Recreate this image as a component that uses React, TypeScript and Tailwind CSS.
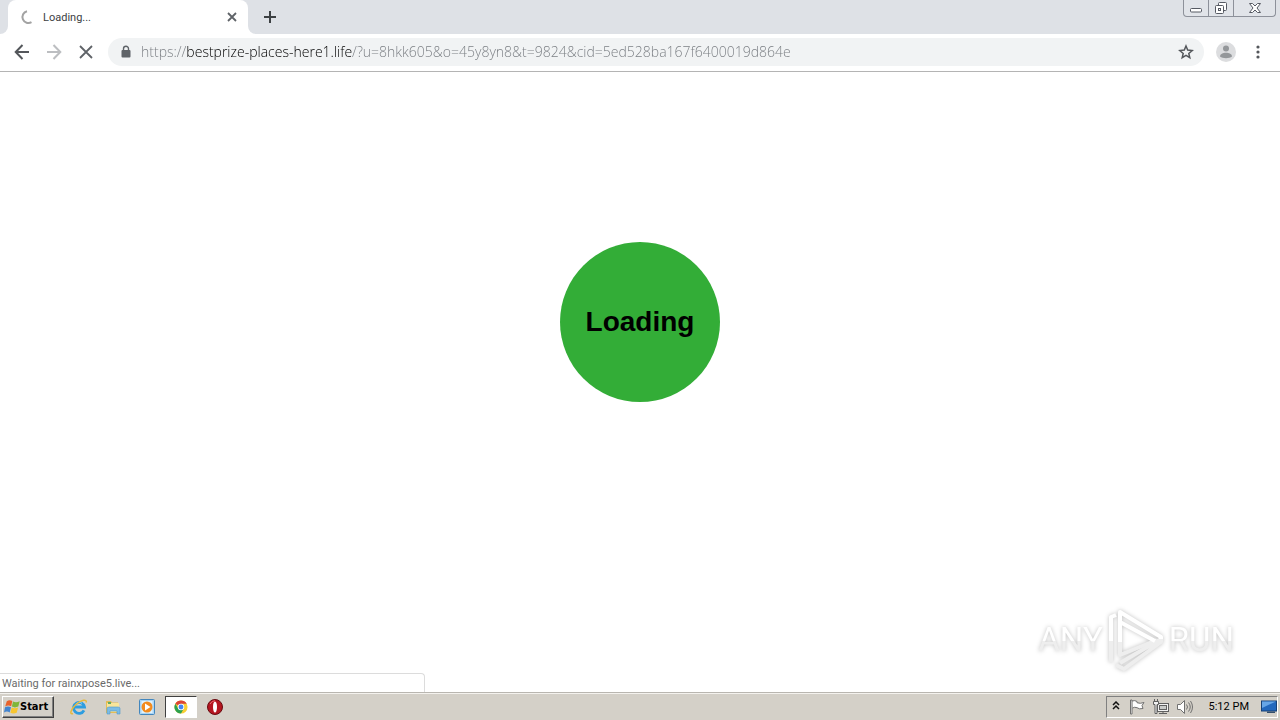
import type { ReactNode } from "react";

const PAGE_URL =
  "https://bestprize-places-here1.life/?u=8hkk605&o=45y8yn8&t=9824&cid=5ed528ba167f6400019d864e";

function IconButton({ label, className, children }: { label: string; className?: string; children: ReactNode }) {
  return (
    <button type="button" aria-label={label} className={`flex shrink-0 items-center justify-center ${className ?? ""}`}>
      {children}
    </button>
  );
}

function TabStrip() {
  return (
    <header className="flex h-[34px] items-stretch bg-[#dee1e6]">
      <div className="flex w-2 bg-white">
        <div className="flex-1 rounded-br-lg bg-[#dee1e6]" />
      </div>
      <div className="flex w-60 items-center rounded-t-lg bg-white pr-2 pl-3">
        <svg className="size-4 shrink-0" viewBox="0 0 16 16" fill="none" stroke="#a3a3a3" strokeWidth="2">
          <path d="M7 2.200A6 6 0 1 0 11.500 13.200" />
        </svg>
        <span className="ml-[7px] flex-1 pt-px text-[11px] leading-4 text-[#3c4043]">Loading...</span>
        <IconButton label="Close tab" className="size-4">
          <svg className="size-4" viewBox="0 0 16 16" stroke="#5f6368" strokeWidth="1.800">
            <path d="M4 4l8 8M12 4l-8 8" />
          </svg>
        </IconButton>
      </div>
      <div className="flex w-2 bg-white">
        <div className="flex-1 rounded-bl-lg bg-[#dee1e6]" />
      </div>
      <IconButton label="New tab" className="w-7">
        <svg className="size-4" viewBox="0 0 16 16" stroke="#3c4043" strokeWidth="2">
          <path d="M8 2v12M2 8h12" />
        </svg>
      </IconButton>
      <div className="mr-1 ml-auto flex h-[17px] rounded-b-[4px] border border-t-0 border-[#8d919a] bg-[#e1e4e9]">
        <IconButton label="Minimize" className="w-[25px] border-r border-[#8d919a]">
          <svg className="h-4 w-6" viewBox="0 0 24 16" fill="#fff" stroke="#565a63">
            <rect x="6.500" y="8.500" width="11" height="3.500" rx="1" />
          </svg>
        </IconButton>
        <IconButton label="Restore" className="w-[25px] border-r border-[#8d919a]">
          <svg className="h-4 w-6" viewBox="0 0 24 16" fill="#fff" stroke="#565a63">
            <rect x="9.500" y="2.500" width="8" height="8" rx="1" />
            <rect x="6.500" y="5.500" width="8" height="8" rx="1" />
            <rect x="9.500" y="8.500" width="2" height="2" />
          </svg>
        </IconButton>
        <IconButton label="Close" className="w-[41px]">
          <svg className="h-4 w-6" viewBox="0 0 24 16" fill="#fff" stroke="#565a63" strokeLinejoin="round">
            <path d="M6.500 3.500h3L12 6l2.500-2.500h3L14 8l3.500 4.500h-3L12 10l-2.500 2.500h-3L10 8z" />
          </svg>
        </IconButton>
      </div>
    </header>
  );
}

function Toolbar() {
  return (
    <nav className="flex h-[38px] items-center border-b border-[#b4b4b4] bg-white pr-3 pb-[2px] pl-[10px]">
      <IconButton label="Back" className="mr-2 size-6">
        <svg className="size-6" viewBox="0 0 24 24" fill="none" stroke="#54575b" strokeWidth="2">
          <path d="M19 12H6M12.500 5L5.700 12l6.800 7" />
        </svg>
      </IconButton>
      <IconButton label="Forward" className="mr-2 size-6">
        <svg className="size-6" viewBox="0 0 24 24" fill="none" stroke="#bcbec1" strokeWidth="2">
          <path d="M5 12h13M11.500 5l6.800 7-6.800 7" />
        </svg>
      </IconButton>
      <IconButton label="Stop loading" className="mr-[10px] size-6">
        <svg className="size-6" viewBox="0 0 24 24" stroke="#5f6368" strokeWidth="1.800">
          <path d="M6 6l12 12M18 6L6 18" />
        </svg>
      </IconButton>
      <div className="flex h-7 min-w-0 flex-1 items-center rounded-full bg-[#f1f3f4] pr-[10px] pl-[10px]">
        <svg className="size-4 shrink-0" viewBox="0 0 16 16" aria-hidden="true">
          <rect x="3.500" y="6" width="9" height="7.500" rx="1" fill="#5f6368" />
          <path d="M5.500 6.500V4.700a2.500 2.500 0 0 1 5 0v1.800" fill="none" stroke="#5f6368" strokeWidth="1.400" />
        </svg>
        <input
          aria-label="Address"
          type="text"
          defaultValue={PAGE_URL}
          className="ml-[7px] h-6 min-w-0 flex-1 bg-[linear-gradient(to_right,#777b80_46px,#000_46px,#000_211px,#777b80_211px)] bg-clip-text font-['Open_Sans',sans-serif] text-[14px] font-light text-transparent outline-none"
        />
        <IconButton label="Bookmark this page" className="size-4">
          <svg className="size-4" viewBox="0 0 16 16" fill="none" stroke="#54575b" strokeWidth="1.500">
            <path d="M8 2l1.700 4.100 4.500.4-3.400 2.900 1 4.300L8 11.400l-3.800 2.300 1-4.300-3.400-2.900 4.500-.4z" />
          </svg>
        </IconButton>
      </div>
      <IconButton label="Profile" className="ml-3 size-5">
        <svg className="size-5" viewBox="0 0 20 20">
          <circle cx="10" cy="10" r="10" fill="#dcdddf" />
          <circle cx="10" cy="6.500" r="3" fill="#94979a" />
          <path d="M4 14.500c0-2.600 3-3.800 6-3.800s6 1.200 6 3.800c-1.300 1.200-3.500 1.700-6 1.700s-4.700-.5-6-1.700z" fill="#94979a" />
        </svg>
      </IconButton>
      <IconButton label="Menu" className="ml-3 size-5">
        <svg className="size-5" viewBox="0 0 20 20" fill="#54575b">
          <circle cx="10" cy="5" r="1.600" />
          <circle cx="10" cy="10" r="1.600" />
          <circle cx="10" cy="15" r="1.600" />
        </svg>
      </IconButton>
    </nav>
  );
}

function Watermark() {
  return (
    <div className="absolute right-[46px] bottom-5 flex items-center gap-[5px] font-['Roboto',sans-serif] text-[33px] leading-[64px] drop-shadow-[0_0_2px_rgba(0,0,0,0.25)]">
      <span className="bg-[linear-gradient(to_bottom,#fff_52%,#eee_52%)] bg-clip-text text-transparent">ANY</span>
      <svg className="h-16 w-14" viewBox="0 0 56 64" fill="none" strokeWidth="4" strokeLinejoin="round" aria-hidden="true">
        <g stroke="#eeeeee">
          <path d="M3 54V33M12 33v14l37-15" />
          <path d="M8 57l8 4 37-27v-3L12 55" />
        </g>
        <path d="M3 33V9l5-2" stroke="#fff" />
        <path d="M12 34V4l41 25v2M12 14l35 19" stroke="#fff" />
      </svg>
      <span className="bg-[linear-gradient(to_bottom,#fff_52%,#eee_52%)] bg-clip-text text-transparent">RUN</span>
    </div>
  );
}

function PageContent() {
  return (
    <main className="relative flex flex-1 flex-col items-center bg-white pt-[170px]">
      <div className="flex size-40 items-center justify-center rounded-full bg-[#33ad37]">
        <h1 className="font-['Liberation_Sans',sans-serif] text-[28px] leading-8 font-bold text-black">Loading</h1>
      </div>
      <Watermark />
      <div
        role="status"
        className="absolute bottom-0 left-0 w-[425px] rounded-tr-[4px] border-t border-r border-[#dcdcdc] bg-white pt-px pl-[2px] text-[11px] leading-[17px] text-[#6a6a6a]"
      >
        Waiting for rainxpose5.live...
      </div>
    </main>
  );
}

function WindowsFlag() {
  return (
    <svg className="size-4 shrink-0" viewBox="0 0 16 16">
      <path d="M2.800 2.200Q5.500.2 8.300 2L7.200 7.200Q4.200 5.600 1.200 7.400z" fill="#e8622c" />
      <path d="M9 2.400Q12 4 15.700 2.200L14.300 7.600Q10.800 9.200 7.900 7.600z" fill="#7fb63a" />
      <path d="M1 8.200Q4 6.600 7 8.200L5.700 13.400Q3 11.800 0 13.400z" fill="#4284cf" />
      <path d="M7.700 8.500Q10.800 10 14.100 8.400L12.700 13.800Q9.300 15.400 6.400 13.800z" fill="#f7c52f" />
    </svg>
  );
}

function Taskbar() {
  return (
    <footer className="flex h-7 items-center border-t border-[#b9b6b0] bg-[#d4d0c8] pr-[2px] pl-[2px] shadow-[inset_0_1px_0_#f4f2ee]">
      <button
        type="button"
        className="flex h-[22px] w-[52px] shrink-0 items-center border border-t-white border-r-[#404040] border-b-[#404040] border-l-white pt-px pl-px font-['DejaVu_Sans_Condensed','DejaVu_Sans',sans-serif] text-[11px] font-bold text-black shadow-[inset_-1px_-1px_0_#808080]"
      >
        <WindowsFlag />
        Start
      </button>
      <div className="ml-[9px] flex items-center gap-[2px]">
        <IconButton label="Internet Explorer" className="h-[22px] w-8">
          <svg className="size-[18px]" viewBox="0 0 18 18" fill="none">
            <path d="M14 12.300A5.500 5.500 0 1 1 14.500 9H5" stroke="#2d9de0" strokeWidth="2.800" />
            <path d="M5.500 6.500A4.500 4.500 0 0 1 12 5.300" stroke="#8fd7fa" strokeWidth="1" />
            <path d="M3 15.500C-1 17 1 11 6 6.500S17.500.5 16 4.500" stroke="#e7b93b" strokeWidth="1.500" />
          </svg>
        </IconButton>
        <IconButton label="Windows Explorer" className="h-[22px] w-8">
          <svg className="size-4" viewBox="0 0 16 16">
            <path d="M1 2h5l1 1.500h6V14H1z" fill="#e5bd55" />
            <path d="M2 4h12v9H2z" fill="#f9e59a" />
            <path d="M3 3h3v2H3z" fill="#61ab63" />
            <path d="M2 9.500Q2 8 4 8h9q2 0 2 1.500V15h-3v-3H5v3H2z" fill="#7cbce5" stroke="#4f99ca" strokeWidth=".6" />
          </svg>
        </IconButton>
        <IconButton label="Media Player" className="h-[22px] w-8">
          <svg className="size-4" viewBox="0 0 16 16">
            <rect x=".5" y=".5" width="15" height="15" rx="1" fill="#a9d5f6" stroke="#4386bd" />
            <rect x="2.500" y="2" width="11" height="12" fill="#dff2fd" />
            <circle cx="8" cy="8" r="5.500" fill="#f38b1e" />
            <path d="M6 4.500L11.500 8 6 11.500z" fill="#fff" />
          </svg>
        </IconButton>
        <IconButton
          label="Google Chrome"
          className="h-[22px] w-8 border border-t-[#404040] border-r-white border-b-white border-l-[#404040] bg-white"
        >
          <svg className="size-[14px]" viewBox="0 0 16 16">
            <circle cx="8" cy="8" r="7.500" fill="#f9cf34" />
            <path d="M8 8L1.500 4.250A7.500 7.500 0 0 1 14.500 4.250H8z" fill="#dc4437" />
            <path d="M1.500 4.250A7.500 7.500 0 0 0 8 15.500L11.200 9.800 8 8 4.800 9.800z" fill="#2ca150" />
            <circle cx="8" cy="8" r="3.700" fill="#fff" />
            <circle cx="8" cy="8" r="2.800" fill="#4285f4" />
          </svg>
        </IconButton>
        <IconButton label="Opera" className="h-[22px] w-8">
          <svg className="size-4" viewBox="0 0 16 16">
            <circle cx="8" cy="8" r="7.500" fill="#b51620" stroke="#680a10" />
            <ellipse cx="8" cy="8" rx="2" ry="5.500" fill="#fff" />
            <path d="M3 5Q5 1.500 8 1.800" stroke="#ed6b72" fill="none" />
          </svg>
        </IconButton>
      </div>
      <div className="ml-auto flex h-[22px] items-center border border-t-[#808080] border-r-white border-b-white border-l-[#808080] pl-[3px]">
        <IconButton label="Show hidden icons" className="h-4 w-3">
          <svg className="h-3 w-2" viewBox="0 0 8 12" fill="none" stroke="#111" strokeWidth="1.500">
            <path d="M1 4l3-3 3 3M1 8l3-3 3 3" />
          </svg>
        </IconButton>
        <IconButton label="Action Center" className="ml-[7px] size-4">
          <svg className="size-4" viewBox="0 0 16 16" fill="#fff" stroke="#707070">
            <path d="M3 2q3-1 5 .5v1.200q3 1.300 7-.2l-2 3 1 3q-4 1-6-.8Q5.500 7.700 3.500 9M1.500 1h1.500v14h-1.500z" />
          </svg>
        </IconButton>
        <IconButton label="Network" className="ml-2 size-4">
          <svg className="size-4" viewBox="0 0 16 16" fill="#f2f2f2" stroke="#606060">
            <rect x="4.500" y="4.500" width="11" height="8" />
            <rect x="6.500" y="6.500" width="7" height="4" fill="#c9cbc9" />
            <path d="M6 14.500h8M10 12.500v2M1.500 2v-2M4.500 2v-2M.5 2.500h5v3h-1.500v9h-2v-9H.5z" />
          </svg>
        </IconButton>
        <IconButton label="Volume" className="ml-2 size-4">
          <svg className="size-4" viewBox="0 0 16 16" fill="#fff" stroke="#707070">
            <path d="M.5 5.500h3L7.500 1.500v13L3.500 10.500h-3z" />
            <path d="M9.500 5.500q2 2.500 0 5M11.500 3.500q3.500 4.500 0 9M13.500 2q4 6 0 12" fill="none" />
          </svg>
        </IconButton>
        <time className="ml-4 pt-px text-[11px] leading-4 whitespace-nowrap text-black">5:12 PM</time>
        <IconButton label="Show desktop" className="ml-3 size-4">
          <svg className="size-4" viewBox="0 0 16 16">
            <rect x=".5" y="2" width="15" height="10" fill="#2368bd" stroke="#174176" />
            <path d="M1 2.500h14L1 9z" fill="#67a6e7" />
            <path d="M6 12.500h8v1.500H6z" fill="#334e6c" />
          </svg>
        </IconButton>
      </div>
    </footer>
  );
}

export default function App() {
  return (
    <div className="flex min-h-screen flex-col bg-white font-['Roboto',sans-serif]">
      <TabStrip />
      <Toolbar />
      <PageContent />
      <Taskbar />
    </div>
  );
}
